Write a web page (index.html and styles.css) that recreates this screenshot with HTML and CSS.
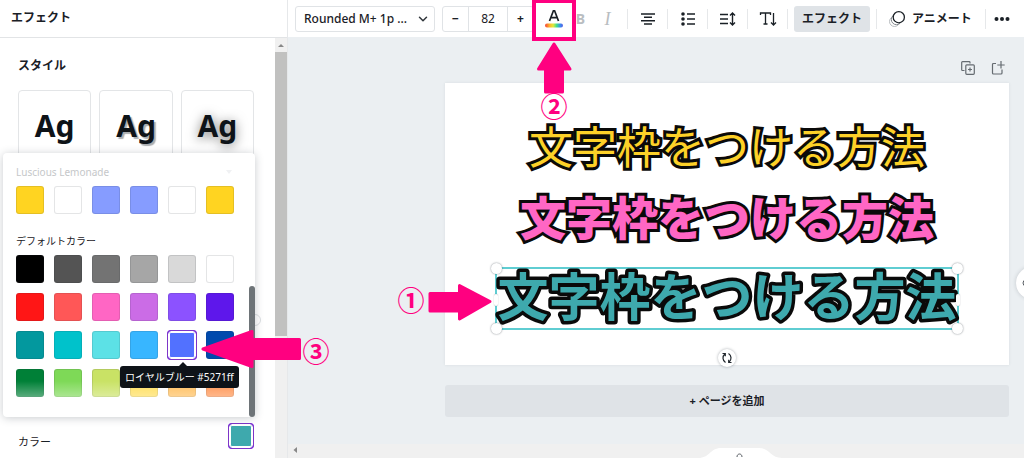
FILE: index.html
```html
<!DOCTYPE html>
<html lang="ja">
<head>
<meta charset="utf-8">
<meta name="viewport" content="width=device-width, initial-scale=1">
<title>エフェクト</title>
<link rel="stylesheet" href="styles.css">
</head>
<body>
<aside class="panel">
  <h1 class="panel-title">エフェクト</h1>
  <div class="panel-body">
    <div class="panel-content">
      <h2 class="section-title">スタイル</h2>
      <div class="styles">
        <button class="style-card">Ag</button>
        <button class="style-card style-shadow">Ag</button>
        <button class="style-card style-lift">Ag</button>
      </div>
      <div class="color-row">
        <span id="color-label">カラー</span>
        <button class="swatch selected c-current" aria-labelledby="color-label"></button>
      </div>
      <span class="slider-knob"></span>
    </div>
    <div class="vscroll"><svg width="12" height="14" viewBox="0 0 12 14"><path d="M3 9l3-3 3 3z" fill="#888"/></svg><div class="vthumb"></div></div>
  </div>
  <div class="picker">
    <div class="picker-name"><span>Luscious Lemonade</span><svg width="8" height="8" viewBox="0 0 8 8"><path d="M1 2h6L4 6z" fill="#f0f1f3"/></svg></div>
    <div class="swatches">
      <button class="swatch c-lemon" aria-label="レモン"></button><button class="swatch c-white" aria-label="白"></button><button class="swatch c-peri" aria-label="青"></button><button class="swatch c-peri" aria-label="青"></button><button class="swatch c-white" aria-label="白"></button><button class="swatch c-lemon" aria-label="レモン"></button>
    </div>
    <h3 class="picker-heading">デフォルトカラー</h3>
    <div class="swatches">
      <button class="swatch c-black" aria-label="#000000"></button><button class="swatch c-g1" aria-label="#545454"></button><button class="swatch c-g2" aria-label="#737373"></button><button class="swatch c-g3" aria-label="#a6a6a6"></button><button class="swatch c-g4" aria-label="#d9d9d9"></button><button class="swatch c-white" aria-label="#ffffff"></button>
      <button class="swatch c-red" aria-label="#ff1616"></button><button class="swatch c-coral" aria-label="#ff5757"></button><button class="swatch c-pink" aria-label="#ff66c4"></button><button class="swatch c-magenta" aria-label="#cb6ce6"></button><button class="swatch c-violet" aria-label="#8c52ff"></button><button class="swatch c-purple" aria-label="#5e17eb"></button>
      <button class="swatch c-teal" aria-label="#03989e"></button><button class="swatch c-turq" aria-label="#00c2cb"></button><button class="swatch c-aqua" aria-label="#5ce1e6"></button><button class="swatch c-sky" aria-label="#38b6ff"></button><button class="swatch selected c-royal" aria-describedby="tip" aria-label="#5271ff"></button><button class="swatch c-cobalt" aria-label="#004aad"></button>
      <button class="swatch c-green" aria-label="#008037"></button><button class="swatch c-grass" aria-label="#7ed957"></button><button class="swatch c-lime" aria-label="#c9e265"></button><button class="swatch c-yellow" aria-label="#ffde59"></button><button class="swatch c-peach" aria-label="#ffbd59"></button><button class="swatch c-orange" aria-label="#ff914d"></button>
    </div>
    <div class="fade"></div>
    <div class="picker-thumb"></div>
    <div class="tooltip" id="tip" role="tooltip">ロイヤルブルー #5271ff</div>
  </div>
</aside>

<main class="editor">
  <div class="toolbar">
    <div class="font-picker">
      <select aria-label="フォント"><option>Rounded M+ 1p ...</option></select>
      <svg class="chevron" width="10" height="8" viewBox="0 0 10 8" fill="none" stroke="#30363b" stroke-width="1.5" stroke-linecap="round" stroke-linejoin="round"><path d="M1.500 2.200L5 5.700l3.500-3.500"/></svg>
    </div>
    <div class="stepper">
      <button aria-label="小さく">−</button><input aria-label="サイズ" value="82"><button aria-label="大きく">+</button>
    </div>
    <button class="tool narrow" aria-label="テキストの色"><svg width="18" height="20" viewBox="0 0 18 20"><defs><linearGradient id="rainbow"><stop offset="0" stop-color="#f4403a"/><stop offset=".25" stop-color="#fdb52a"/><stop offset=".45" stop-color="#e4e83a"/><stop offset=".65" stop-color="#3ee08c"/><stop offset=".85" stop-color="#3a8cf0"/><stop offset="1" stop-color="#5a5ce0"/></linearGradient></defs><path d="M4.500 12L8.400 1.800h1.200L13.500 12M6 8.700h6" fill="none" stroke="#1a2026" stroke-width="1.700"/><rect x="0" y="14.500" width="18" height="4" rx="2" fill="url(#rainbow)"/></svg></button>
    <button class="tool narrow letter" disabled><b>B</b></button>
    <button class="tool narrow letter serif" disabled><i>I</i></button>
    <span class="rule"></span>
    <button class="tool" aria-label="配置"><svg width="16" height="14" viewBox="0 0 16 14" stroke="#1a2026" stroke-width="1.500"><path d="M1 2h14M4 5.300h8M1 8.700h14M4 12h8"/></svg></button>
    <span class="rule"></span>
    <button class="tool" aria-label="リスト"><svg width="14" height="14" viewBox="0 0 14 14" stroke="#1a2026" stroke-width="1.500"><path d="M6 2h8M6 7h8M6 12h8"/><g fill="#1a2026" stroke="none"><circle cx="2" cy="2" r="1.800"/><circle cx="2" cy="7" r="1.800"/><circle cx="2" cy="12" r="1.800"/></g></svg></button>
    <span class="rule"></span>
    <button class="tool" aria-label="間隔"><svg width="16" height="14" viewBox="0 0 16 14" fill="none" stroke="#1a2026" stroke-width="1.400"><path d="M0 2.500h8M0 7h8M0 11.500h8M12.500 1v12M10 3.500L12.500 1 15 3.500M10 10.500l2.500 2.500 2.500-2.500"/></svg></button>
    <span class="rule"></span>
    <button class="tool" aria-label="縦書き"><svg width="18" height="16" viewBox="0 0 18 16" fill="none" stroke="#1a2026" stroke-width="1.300"><path d="M1.500 4V2h10v2M6.500 2v11M4.500 13h4M14.500 2v12M12 11.500l2.500 2.500 2.500-2.500"/></svg></button>
    <span class="rule"></span>
    <button class="text-tool active">エフェクト</button>
    <span class="rule"></span>
    <button class="text-tool animate"><svg width="18" height="18" viewBox="0 0 18 18" fill="none"><circle cx="6.500" cy="11.500" r="5" stroke="#b8bcc0"/><circle cx="8.500" cy="9.500" r="5.200" fill="#fff" stroke="#83888d"/><circle cx="10.800" cy="7.200" r="5.600" fill="#fff" stroke="#1a2026" stroke-width="1.300"/></svg>アニメート</button>
    <span class="rule"></span>
    <button class="tool more" aria-label="その他"><svg width="16" height="6" viewBox="0 0 16 6" fill="#1a2026"><circle cx="2.500" cy="3" r="2"/><circle cx="8" cy="3" r="2"/><circle cx="13.500" cy="3" r="2"/></svg></button>
  </div>

  <div class="workspace">
    <div class="page-tools">
      <button aria-label="ページを複製"><svg width="14" height="14" viewBox="0 0 14 14" fill="none" stroke="#656b71" stroke-width="1.200"><path d="M3.500 9.500h-2A.8.800 0 01.700 8.700V1.500a.8.800 0 01.8-.8h6.700a.8.800 0 01.8.8v1"/><rect x="4.800" y="3.800" width="8.500" height="9.500" rx="1"/><path d="M9 6.500v4M7 8.500h4"/></svg></button>
      <button aria-label="新しいページ"><svg width="14" height="14" viewBox="0 0 14 14" fill="none" stroke="#656b71" stroke-width="1.200"><path d="M5 2.500H2.500a1 1 0 00-1 1v8.500a1 1 0 001 1h7.500a1 1 0 001-1V8.500M10 0v7.500M6.300 4H13.700"/></svg></button>
    </div>
    <section class="page">
      <p class="line line-yellow">文字枠をつける方法</p>
      <p class="line line-pink">文字枠をつける方法</p>
      <div class="selection">
        <svg class="line-teal" viewBox="0 0 460 59"><text x="230" y="47" text-anchor="middle">文字枠をつける方法</text></svg>
        <i class="handle tl"></i><i class="handle tr"></i><i class="handle bl"></i><i class="handle br"></i>
        <i class="grip left"></i><i class="grip right"></i>
        <button class="rotate" aria-label="回転"><svg width="12" height="12" viewBox="0 0 12 12" fill="none" stroke="#20262c" stroke-width="1.200"><path d="M4.500 10.500C1.500 8.500 1 4.500 4 1.800M1.500 1.500H4.300V4.300M7.500 1.500c3 2 3.500 6 .5 8.700M10.500 10.500H7.700V7.700"/></svg></button>
      </div>
    </section>
    <button class="add-page">+ ページを追加</button>
    <button class="side-knob" aria-label="コメント"><svg width="8" height="8" viewBox="0 0 8 8"><circle cx="4" cy="4" r="3" fill="none" stroke="#555b61"/></svg></button>
  </div>
  <footer class="hscroll">
    <svg width="14" height="12" viewBox="0 0 14 12"><path d="M9 3v6L5.500 6z" fill="#888"/></svg>
    <button class="pull-tab" aria-label="ページ一覧"><svg width="84" height="10" viewBox="0 0 84 10"><path d="M0 10C12 10 12 0 23 0H61C72 0 72 10 84 10z" fill="#fff"/><path d="M39 9c0-4 5-4 5 0" fill="none" stroke="#555b61"/></svg></button>
  </footer>
</main>

<svg class="notes" width="1024" height="458" viewBox="0 0 1024 458">
  <g fill="#ff0080" stroke="#ff0080" stroke-width="3" stroke-linejoin="round">
    <path d="M490 301.500L459.500 319V311H430V293.500H459.500V285.500z"/>
    <path d="M554 44L570 69H562.500V92H545.500V69H538.500z"/>
    <path d="M203 349L252 331.500V339.500H299.500V358.500H252V366.500z"/>
  </g>
  <rect x="534" y="1" width="40" height="38" fill="none" stroke="#ff0080" stroke-width="4"/>
  <g class="note-number" text-anchor="middle"><text x="411" y="311">①</text><text x="554" y="117">②</text><text x="316" y="362">③</text></g>
</svg>
</body>
</html>
```
FILE: styles.css
```css
* { box-sizing: border-box; }
body {
  margin: 0;
  position: relative;
  display: flex;
  min-height: 100vh;
  overflow: hidden;
  background: #fff;
  color: #1a2026;
  font: 12px/16px "Noto Sans", "Noto Sans CJK JP", sans-serif;
}
button, input, select { font: inherit; color: inherit; border: 0; padding: 0; margin: 0; background: none; }
h1, h2, h3, p { margin: 0; font-size: 12px; }
svg { display: block; flex: none; }

.panel { position: relative; flex: none; width: 288px; display: flex; flex-direction: column; border-right: 1px solid #e6e8ea; }
.panel-title { height: 38px; padding: 10px 11px; border-bottom: 1px solid #e2e4e6; }
.panel-body { flex: 1; display: flex; }
.panel-content { position: relative; flex: 1; display: flex; flex-direction: column; padding: 20px 21px 8px 18px; }
.section-title { margin-bottom: 16px; }
.styles { display: grid; grid-template-columns: repeat(3, 1fr); gap: 8px; }
.style-card { height: 72px; border: 1px solid #e3e5e7; border-radius: 4px; font-size: 30px; font-weight: 700; color: #0e1318; }
.style-shadow { text-shadow: 2px 2px 1px #aaadb0; }
.style-lift { text-shadow: 0 2px 12px #777; }
.color-row { margin-top: auto; display: flex; align-items: flex-end; justify-content: space-between; font-size: 11px; }
.slider-knob { position: absolute; right: 14px; top: 276px; width: 12px; height: 12px; border: 1px solid #dcdfe2; border-radius: 50%; }
.vscroll { width: 12px; background: #f0f0f0; }
.vthumb { height: 284px; background: #c1c1c0; }

.picker { position: absolute; left: 3px; top: 153px; width: 252px; height: 264px; padding: 11px 13px; background: #fff; border-radius: 4px; box-shadow: 0 1px 8px rgba(40, 50, 65, .25); }
.picker-name { display: flex; align-items: center; justify-content: space-between; padding-right: 9px; margin-bottom: 6px; font-size: 10px; color: #c5c7c9; }
.picker-heading { margin: 19px 0 6px; font-size: 10px; font-weight: 400; }
.swatches { display: grid; grid-template-columns: repeat(6, 28px); gap: 10px; }
.swatch { position: relative; width: 28px; height: 28px; border-radius: 3px; border: 1px solid rgba(30, 40, 50, .12); }
.selected { border-color: #fff; box-shadow: inset 0 0 0 1px #fff, 0 0 0 1px #7d2ae8; outline: 1px solid #7d35c8; }
.c-current { width: 24px; height: 24px; background: #3ea9ad; margin-right: 1px; margin-bottom: 2px; }
.c-lemon { background: #ffd421; } .c-white { background: #fff; } .c-peri { background: #869cff; }
.c-black { background: #000; } .c-g1 { background: #545454; } .c-g2 { background: #737373; } .c-g3 { background: #a6a6a6; } .c-g4 { background: #d9d9d9; }
.c-red { background: #ff1616; } .c-coral { background: #ff5757; } .c-pink { background: #ff66c4; } .c-magenta { background: #cb6ce6; } .c-violet { background: #8c52ff; } .c-purple { background: #5e17eb; }
.c-teal { background: #03989e; } .c-turq { background: #00c2cb; } .c-aqua { background: #5ce1e6; } .c-sky { background: #38b6ff; } .c-royal { background: #5271ff; } .c-cobalt { background: #004aad; }
.c-green { background: #008037; } .c-grass { background: #7ed957; } .c-lime { background: #c9e265; } .c-yellow { background: #ffde59; } .c-peach { background: #ffbd59; } .c-orange { background: #ff914d; }
.fade { position: absolute; left: 0; right: 8px; bottom: 18px; height: 18px; background: linear-gradient(rgba(255, 255, 255, 0), rgba(255, 255, 255, .4)); }
.picker-thumb { position: absolute; right: 0; top: 133px; width: 6px; height: 131px; border-radius: 3px; background: #6e7478; }
.tooltip { position: absolute; left: 117px; top: 213px; padding: 3px 5px; border-radius: 3px; background: #0e1318; color: #fff; font-size: 10px; white-space: nowrap; }
.tooltip::before { content: ""; position: absolute; left: 59px; top: -4px; border: solid transparent; border-width: 0 4px 4px; border-bottom-color: #0e1318; }

.editor { flex: 1; min-width: 0; display: flex; flex-direction: column; }
.toolbar { display: flex; align-items: center; height: 37px; padding: 0 6px 0 7px; background: #fff; }
.font-picker { position: relative; flex: none; width: 140px; height: 26px; margin-right: 7px; }
.font-picker select { appearance: none; width: 100%; height: 100%; padding: 0 8px; border: 1px solid #e0e3e6; border-radius: 3px; font-weight: 500; }
.chevron { position: absolute; right: 7px; top: 9px; pointer-events: none; }
.stepper { display: flex; flex: none; width: 92px; height: 26px; margin-right: 6px; border: 1px solid #e0e3e6; border-radius: 3px; }
.stepper button { flex: 1; font-weight: 700; }
.stepper input { width: 40px; text-align: center; border: solid #e0e3e6; border-width: 0 1px; }
.tool { flex: none; width: 39px; height: 26px; display: flex; align-items: center; justify-content: center; }
.narrow { width: 27px; }
.letter { color: #b9bdc1; font-size: 14px; }
.serif { font-family: "Liberation Serif", serif; font-size: 18px; margin-right: 6px; }
.more { flex: 1; }
.rule { flex: none; width: 1px; height: 20px; background: #e6e8ea; }
.text-tool { flex: none; height: 26px; border-radius: 3px; font-weight: 700; white-space: nowrap; }
.active { width: 76px; margin: 0 6px; background: #dfe3e7; }
.animate { display: flex; align-items: center; gap: 6px; padding: 0 13px 0 11px; }

.workspace { position: relative; flex: 1; overflow: hidden; padding: 24px 15px 26px 157px; background: #ebeff2; }
.page-tools { display: flex; justify-content: flex-end; gap: 16px; padding: 0 4px 8px; }
.page { aspect-ratio: 2 / 1; padding-top: 40px; display: flex; flex-direction: column; align-items: center; background: #fff; box-shadow: 0 0 3px rgba(60, 70, 80, .1); }
.line { font-family: "Noto Sans CJK JP", sans-serif; line-height: 44px; white-space: nowrap; -webkit-text-stroke: 6px #0a0a0a; paint-order: stroke fill; }
.line-yellow { font-size: 44px; font-weight: 400; color: #fdd128; margin-bottom: 26px; }
.line-pink { font-size: 46px; font-weight: 900; color: #ff66c4; margin-bottom: 30px; }
.selection { position: relative; width: 464px; border: 2px solid #5fcdd2; }
.line-teal { width: 100%; overflow: visible; font-family: "Noto Sans CJK JP", sans-serif; font-size: 51px; font-weight: 700; fill: #3ea9ad; stroke: #0a0a0a; stroke-width: 7px; stroke-linejoin: round; paint-order: stroke; }
.handle { position: absolute; width: 11px; height: 11px; border-radius: 50%; background: #fff; box-shadow: 0 0 2px rgba(40, 50, 60, .6); }
.tl, .tr { top: -6px; } .bl, .br { bottom: -6px; } .tl, .bl { left: -6px; } .tr, .br { right: -6px; }
.grip { position: absolute; top: 25px; width: 4px; height: 12px; border-radius: 2px; background: #fff; box-shadow: 0 0 1px rgba(40, 50, 60, .5); }
.left { left: -3px; } .right { right: -3px; }
.rotate { position: absolute; left: 50%; bottom: -39px; margin-left: -9px; width: 18px; height: 18px; display: grid; place-items: center; border-radius: 50%; background: #fff; box-shadow: 0 0 3px rgba(40, 50, 60, .4); }
.add-page { display: block; width: 100%; height: 32px; margin-top: 20px; border-radius: 3px; background: #dfe3e7; font-size: 11px; font-weight: 700; }
.side-knob { position: absolute; right: -24px; top: 230px; width: 32px; height: 32px; padding-left: 6px; border-radius: 50%; background: #fff; box-shadow: 0 0 4px rgba(40, 50, 60, .2); }
.hscroll { position: relative; height: 14px; background: #f0f0f0; }
.pull-tab { position: absolute; left: 410px; bottom: 0; }

.notes { position: absolute; left: 0; top: 0; pointer-events: none; }
.note-number { font-family: "Noto Sans CJK JP", sans-serif; font-size: 27px; font-weight: 700; fill: #ff0080; }
```
